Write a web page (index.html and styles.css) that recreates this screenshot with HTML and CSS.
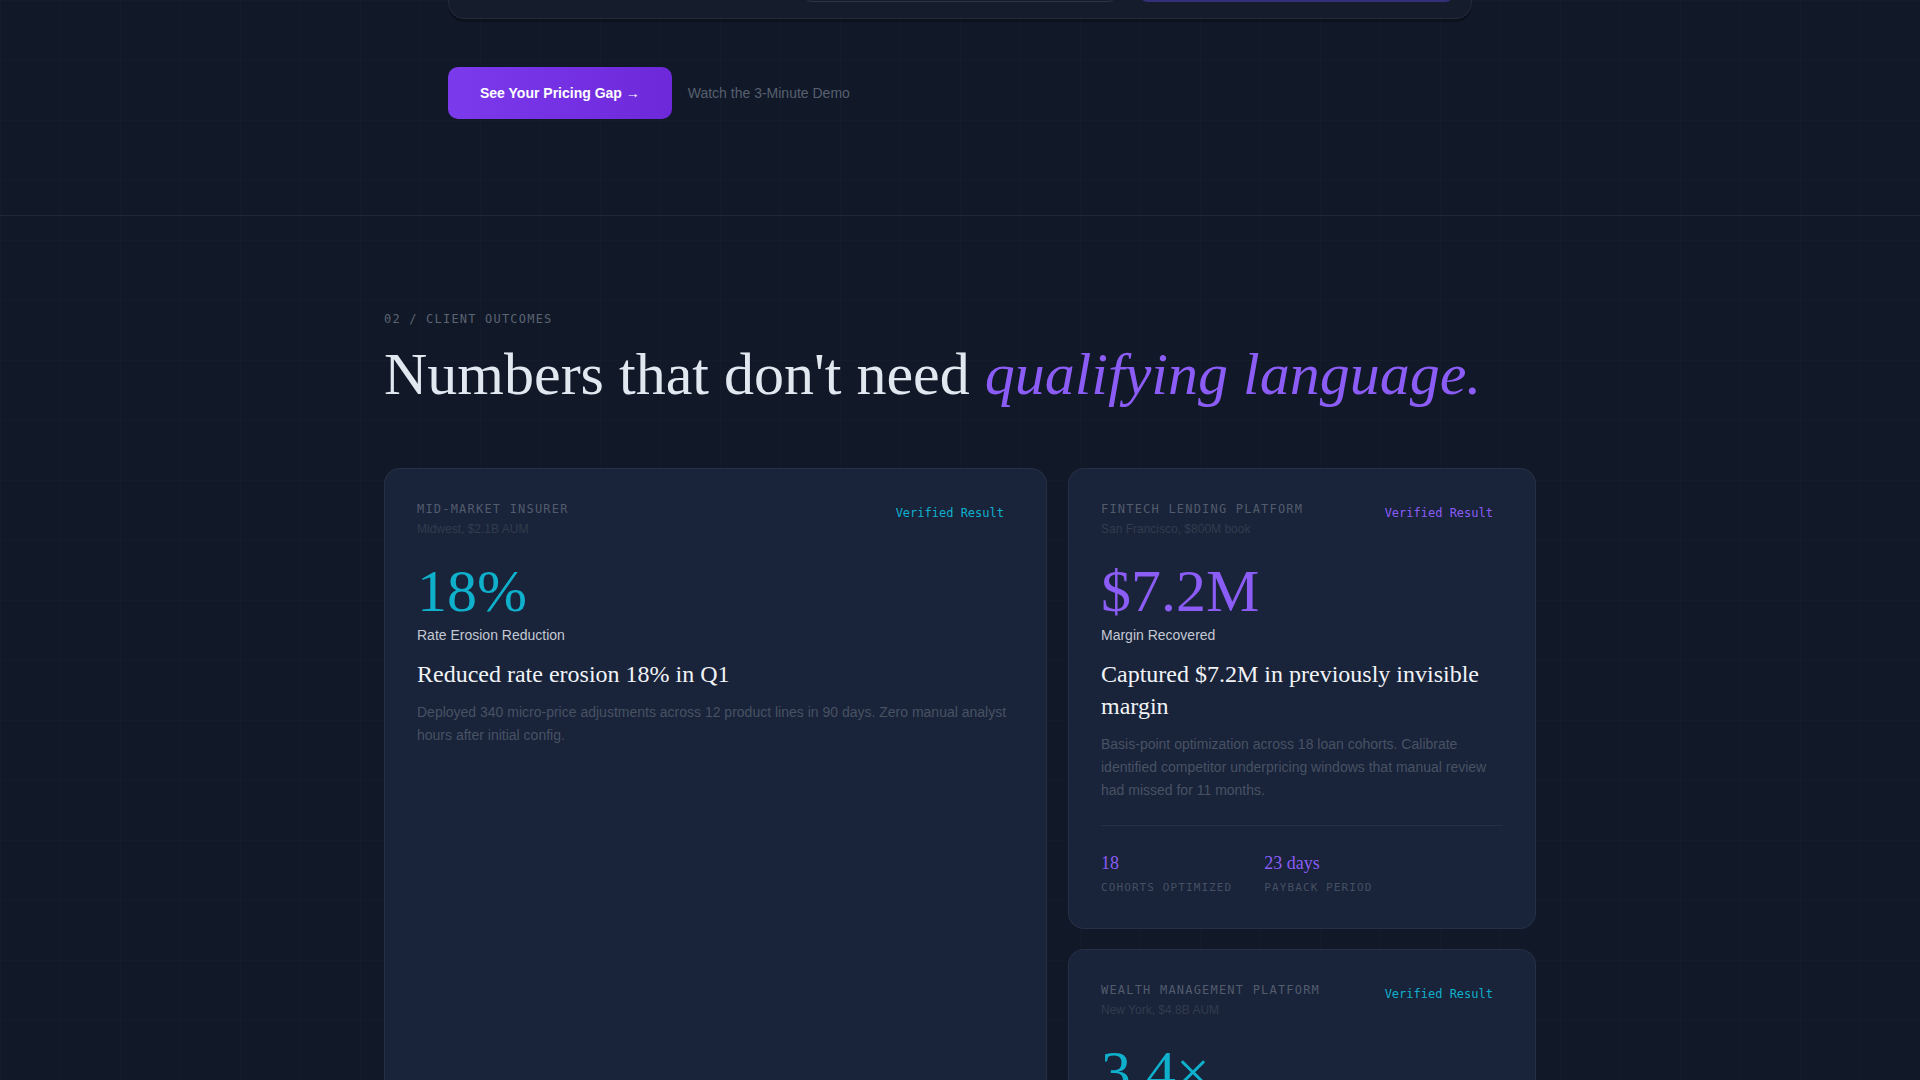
FILE: index.html
```html
<!DOCTYPE html>
<html lang="en">
<head>
<meta charset="utf-8">
<title>Client Outcomes</title>
<link rel="stylesheet" href="styles.css">
</head>
<body>
<div class="page">
  <section class="hero-tail">
    <div class="wrap-narrow">
      <div class="demo-card">
        <div class="demo-col plain"></div>
        <div class="demo-col panel"></div>
        <div class="demo-col panel accent"></div>
      </div>
      <div class="cta-row">
        <a class="btn-primary" href="#">See Your Pricing Gap →</a>
        <a class="link-muted" href="#">Watch the 3-Minute Demo</a>
      </div>
    </div>
  </section>

  <section class="outcomes">
    <div class="wrap">
      <div class="eyebrow">02 / CLIENT OUTCOMES</div>
      <h2 class="headline">Numbers that don't need <em>qualifying language.</em></h2>

      <div class="cases">
        <article class="case case-tall">
          <div class="case-head">
            <div>
              <div class="case-label">MID-MARKET INSURER</div>
              <div class="case-sub">Midwest, $2.1B AUM</div>
            </div>
            <span class="badge cyan">Verified Result</span>
          </div>
          <div class="metric cyan">18%</div>
          <div class="metric-label">Rate Erosion Reduction</div>
          <h3 class="case-title">Reduced rate erosion 18% in Q1</h3>
          <p class="case-desc">Deployed 340 micro-price adjustments across 12 product lines in 90 days. Zero manual analyst hours after initial config.</p>
        </article>

        <article class="case">
          <div class="case-head">
            <div>
              <div class="case-label">FINTECH LENDING PLATFORM</div>
              <div class="case-sub">San Francisco, $800M book</div>
            </div>
            <span class="badge purple">Verified Result</span>
          </div>
          <div class="metric purple">$7.2M</div>
          <div class="metric-label">Margin Recovered</div>
          <h3 class="case-title">Captured $7.2M in previously invisible margin</h3>
          <p class="case-desc">Basis-point optimization across 18 loan cohorts. Calibrate identified competitor underpricing windows that manual review had missed for 11 months.</p>
          <div class="stats">
            <div class="stat">
              <div class="stat-value">18</div>
              <div class="stat-label">COHORTS OPTIMIZED</div>
            </div>
            <div class="stat">
              <div class="stat-value">23 days</div>
              <div class="stat-label">PAYBACK PERIOD</div>
            </div>
          </div>
        </article>

        <article class="case">
          <div class="case-head">
            <div>
              <div class="case-label">WEALTH MANAGEMENT PLATFORM</div>
              <div class="case-sub">New York, $4.8B AUM</div>
            </div>
            <span class="badge cyan">Verified Result</span>
          </div>
          <div class="metric cyan">3.4×</div>
          <div class="metric-label">Fee Realization Lift</div>
          <h3 class="case-title">Tripled fee realization on advisory tiers</h3>
          <p class="case-desc">Segment-level fee schedules recalibrated weekly against peer benchmarks and client retention signals.</p>
          <div class="stats">
            <div class="stat">
              <div class="stat-value">6</div>
              <div class="stat-label">ADVISORY TIERS</div>
            </div>
            <div class="stat">
              <div class="stat-value">41 days</div>
              <div class="stat-label">PAYBACK PERIOD</div>
            </div>
          </div>
        </article>
      </div>
    </div>
  </section>
</div>
</body>
</html>
```

FILE: styles.css
```css
* { box-sizing: border-box; }

html, body {
  margin: 0;
  padding: 0;
}

body {
  background-color: #111827;
  background-image:
    linear-gradient(rgba(255, 255, 255, 0.012) 1px, transparent 1px),
    linear-gradient(90deg, rgba(255, 255, 255, 0.012) 1px, transparent 1px);
  background-size: 60px 60px;
  font-family: "Liberation Sans", Arial, sans-serif;
  color: #e5e7eb;
  overflow: hidden;
}

a { text-decoration: none; }

/* ---------- previous section tail ---------- */
.hero-tail {
  margin-top: -255px;
  padding-bottom: 96px;
}

.wrap-narrow {
  width: 1024px;
  margin: 0 auto;
}

.demo-card {
  display: grid;
  grid-template-columns: 1fr 1fr 1fr;
  gap: 20px;
  padding: 16px;
  background: #151c2b;
  border: 1px solid #232b3b;
  border-radius: 16px;
  box-shadow: 0 3px 0 rgba(0, 0, 0, 0.25);
}

.demo-col {
  height: 240px;
  border-radius: 10px;
}

.demo-col.panel {
  background: #161e2e;
  border: 1px solid #2c3444;
}

.demo-col.panel.accent {
  background: #17182f;
  border: 1px solid #332f78;
  border-bottom-width: 2px;
}

.cta-row {
  display: flex;
  align-items: center;
  gap: 16px;
  margin-top: 48px;
}

.btn-primary {
  display: inline-block;
  padding: 16px 32px;
  font-size: 14px;
  line-height: 20px;
  font-weight: 700;
  color: #ffffff;
  background: linear-gradient(90deg, #7c3aed 0%, #6d28d9 100%);
  border-radius: 10px;
}

.link-muted {
  font-size: 14px;
  line-height: 20px;
  color: #576070;
}

/* ---------- outcomes ---------- */
.outcomes {
  border-top: 1px solid #212938;
  padding-top: 96px;
}

.wrap {
  width: 1152px;
  margin: 0 auto;
}

.eyebrow {
  font-family: "DejaVu Sans Mono", "Liberation Mono", monospace;
  font-size: 12px;
  line-height: 14px;
  letter-spacing: 0.1em;
  color: #5b6473;
}

.headline {
  margin: 15px 0 61px;
  font-family: "Liberation Serif", "Times New Roman", serif;
  font-weight: 400;
  font-size: 60px;
  line-height: 1.1;
  color: #e2e8f0;
}

.headline em {
  font-style: italic;
  color: #8b5cf6;
}

.cases {
  display: grid;
  grid-template-columns: 663fr 468fr;
  column-gap: 21px;
  row-gap: 20px;
  align-items: start;
}

.case {
  background: #19233a;
  border: 1px solid rgba(255, 255, 255, 0.06);
  border-radius: 16px;
  padding: 31px 32px 31px;
}

.case-tall {
  grid-row: span 2;
  align-self: stretch;
}

.case-head {
  display: flex;
  justify-content: space-between;
  align-items: flex-start;
}

.case-label {
  font-family: "DejaVu Sans Mono", "Liberation Mono", monospace;
  font-size: 12px;
  line-height: 18px;
  letter-spacing: 0.1em;
  color: #525c6c;
}

.case-sub {
  margin-top: 2px;
  font-size: 12px;
  line-height: 18px;
  color: #323c4e;
}

.badge {
  padding: 4px 10px;
  font-family: "DejaVu Sans Mono", "Liberation Mono", monospace;
  font-size: 12px;
  line-height: 18px;
}

.badge.cyan { color: #0fb0cc; }
.badge.purple { color: #8b5cf6; }

.metric {
  margin-top: 23px;
  font-family: "Liberation Serif", "Times New Roman", serif;
  font-size: 60px;
  line-height: 1;
}

.metric.cyan { color: #0fb0cc; }
.metric.purple { color: #8b5cf6; }

.metric-label {
  margin-top: 4px;
  font-size: 14px;
  line-height: 20px;
  color: #c3c9d3;
}

.case-title {
  margin: 13px 0 0;
  font-family: "Liberation Serif", "Times New Roman", serif;
  font-weight: 400;
  font-size: 24px;
  line-height: 32px;
  color: #f1f3f6;
}

.case-desc {
  margin: 11px 0 0;
  font-size: 14px;
  line-height: 1.65;
  color: #485263;
}

.stats {
  display: flex;
  gap: 32px;
  margin-top: 23px;
  padding-top: 24px;
  border-top: 1px solid #263044;
}

.stat-value {
  font-family: "Liberation Serif", "Times New Roman", serif;
  font-size: 18px;
  line-height: 27px;
  color: #8b5cf6;
}

.stat-label {
  margin-top: 3px;
  font-family: "DejaVu Sans Mono", "Liberation Mono", monospace;
  font-size: 11px;
  line-height: 16.5px;
  letter-spacing: 0.1em;
  color: #465062;
}
```
